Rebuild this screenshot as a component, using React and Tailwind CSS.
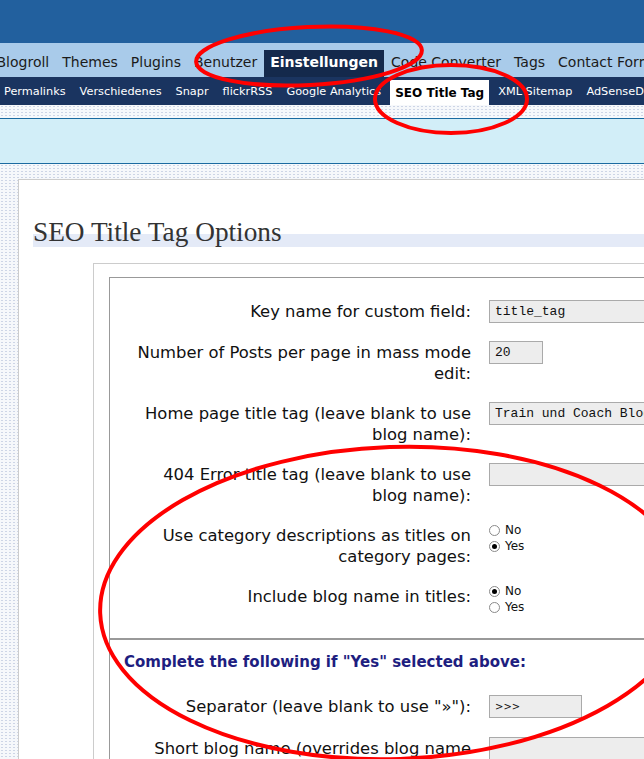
import React from 'react';

const dots = "bg-[#f6f8fb] bg-[radial-gradient(circle,#cdd5e6_0.7px,transparent_0.9px)] bg-[length:4px_3px]";

const topMenu = ['Blogroll', 'Themes', 'Plugins', 'Benutzer', 'Einstellungen', 'Code Converter', 'Tags', 'Contact Form'];
const subMenu = ['Permalinks', 'Verschiedenes', 'Snapr', 'flickrRSS', 'Google Analytics', 'SEO Title Tag', 'XML Sitemap', 'AdSenseDeluxe'];

function TextInput({ value, width = 'w-[220px]', small }) {
  return (
    <div
      className={`${width} h-[23px] border border-[#aaaaaa] bg-[#ededed] pl-[5px] whitespace-nowrap overflow-hidden ${
        small ? "font-['DejaVu_Sans',sans-serif] text-[10px] leading-[21px]" : "font-['Liberation_Mono',monospace] text-[13px] leading-[21px]"
      } text-[#111]`}
    >
      {value}
    </div>
  );
}

function Radio({ checked, label }) {
  return (
    <div className="flex items-center h-[16px] gap-[5px]">
      <span className="w-[11px] h-[11px] rounded-full border border-[#8a8a8a] bg-white flex items-center justify-center">
        {checked && <span className="w-[5px] h-[5px] rounded-full bg-black" />}
      </span>
      <span className="text-[12px] leading-[16px]">{label}</span>
    </div>
  );
}

function Row({ children, label }) {
  return (
    <div className="flex items-start">
      <div className="w-[361px] pt-[2px] text-right leading-[20.5px] whitespace-nowrap">{label}</div>
      <div className="ml-[18px]">{children}</div>
    </div>
  );
}

export default function App() {
  return (
    <div className="relative w-[644px] h-[759px] overflow-hidden bg-white font-['DejaVu_Sans',sans-serif] text-[#111]">
      <div className="w-[900px]">
        {/* header band */}
        <div className="h-[43px] bg-[#22609e]" />

        {/* main menu */}
        <div className="h-[34px] bg-[#a9cbea] flex items-end ml-[-10px] text-[14px]">
          {topMenu.map(item =>
            item === 'Einstellungen' ? (
              <div key={item} className="h-[27px] px-[6px] mx-[0.5px] pb-[3px] flex items-center bg-[#14294c] text-white font-bold">
                {item}
              </div>
            ) : (
              <div key={item} className="h-[27px] px-[6.5px] pb-[3px] flex items-center text-[#1b1b1b]">
                {item}
              </div>
            )
          )}
        </div>

        {/* sub menu */}
        <div className="h-[28px] bg-[#1a3460] flex items-end gap-[4px] ml-[-1px]">
          {subMenu.map(item =>
            item === 'SEO Title Tag' ? (
              <div key={item} className="h-[25px] px-[5px] flex items-center bg-white text-black font-bold text-[12px]">
                {item}
              </div>
            ) : (
              <div key={item} className="h-[25px] px-[5px] flex items-center text-white text-[11.3px]">
                {item}
              </div>
            )
          )}
        </div>

        <div className={`h-[13px] ${dots}`} />
        <div className="h-[46px] border-t border-b border-[#1b6aa0] bg-[#d2eef8]" />
        <div className={`h-[15px] ${dots}`} />

        {/* page body */}
        <div className="flex">
          <div className={`w-[18px] h-[600px] ${dots}`} />
          <div className="flex-1 border-l border-t border-[#cccccc] pl-[14px] pt-[37px]">
            <h2 className="h-[30px] leading-[30px] font-['Liberation_Serif',serif] text-[27.3px] text-[#333] bg-[linear-gradient(to_top,#e4eaf7_13px,transparent_13px)]">
              SEO Title Tag Options
            </h2>

            <div className="mt-[16px] ml-[60px] border border-[#cccccc] pl-[15px] pt-[13px]">
              <div className="border border-[#999999] text-[16.4px]">
                <div className="flex flex-col gap-[18px] pt-[22px] pb-[23px]">
                  <Row label="Key name for custom field:">
                    <TextInput value="title_tag" />
                  </Row>
                  <Row label={<>Number of Posts per page in mass mode<br />edit:</>}>
                    <TextInput value="20" width="w-[54px]" />
                  </Row>
                  <Row label={<>Home page title tag (leave blank to use<br />blog name):</>}>
                    <TextInput value="Train und Coach Blog" />
                  </Row>
                  <Row label={<>404 Error title tag (leave blank to use<br />blog name):</>}>
                    <TextInput value="" />
                  </Row>
                  <Row label={<>Use category descriptions as titles on<br />category pages:</>}>
                    <div className="-mt-[2px]">
                      <Radio label="No" />
                      <Radio label="Yes" checked />
                    </div>
                  </Row>
                  <Row label="Include blog name in titles:">
                    <div className="-mt-[2px]">
                      <Radio label="No" checked />
                      <Radio label="Yes" />
                    </div>
                  </Row>
                </div>

                <div className="border-t-2 border-[#999999] pt-[12px] pb-[40px]">
                  <div className="pl-[14px] text-[15px] leading-[20px] font-bold text-[#1e1e80]">
                    Complete the following if "Yes" selected above:
                  </div>
                  <div className="mt-[23px]">
                    <Row label={'Separator (leave blank to use "»"):'}>
                      <TextInput value=">>>" width="w-[93px]" small />
                    </Row>
                  </div>
                  <div className="mt-[19px]">
                    <Row label={<>Short blog name (overrides blog name<br />in titles):</>}>
                      <TextInput value="" />
                    </Row>
                  </div>
                </div>
              </div>
            </div>
          </div>
        </div>
      </div>

      {/* red annotations */}
      <svg className="absolute inset-0 pointer-events-none" width="644" height="759" viewBox="0 0 644 759">
        <ellipse cx="309" cy="56" rx="113" ry="29" transform="rotate(-3 309 56)" fill="none" stroke="#ff0000" strokeWidth="4" />
        <ellipse cx="451" cy="99" rx="76" ry="34" fill="none" stroke="#ff0000" strokeWidth="4" />
        <ellipse cx="395" cy="603" rx="295" ry="156" transform="rotate(-2 395 603)" fill="none" stroke="#ff0000" strokeWidth="4" />
      </svg>
    </div>
  );
}
